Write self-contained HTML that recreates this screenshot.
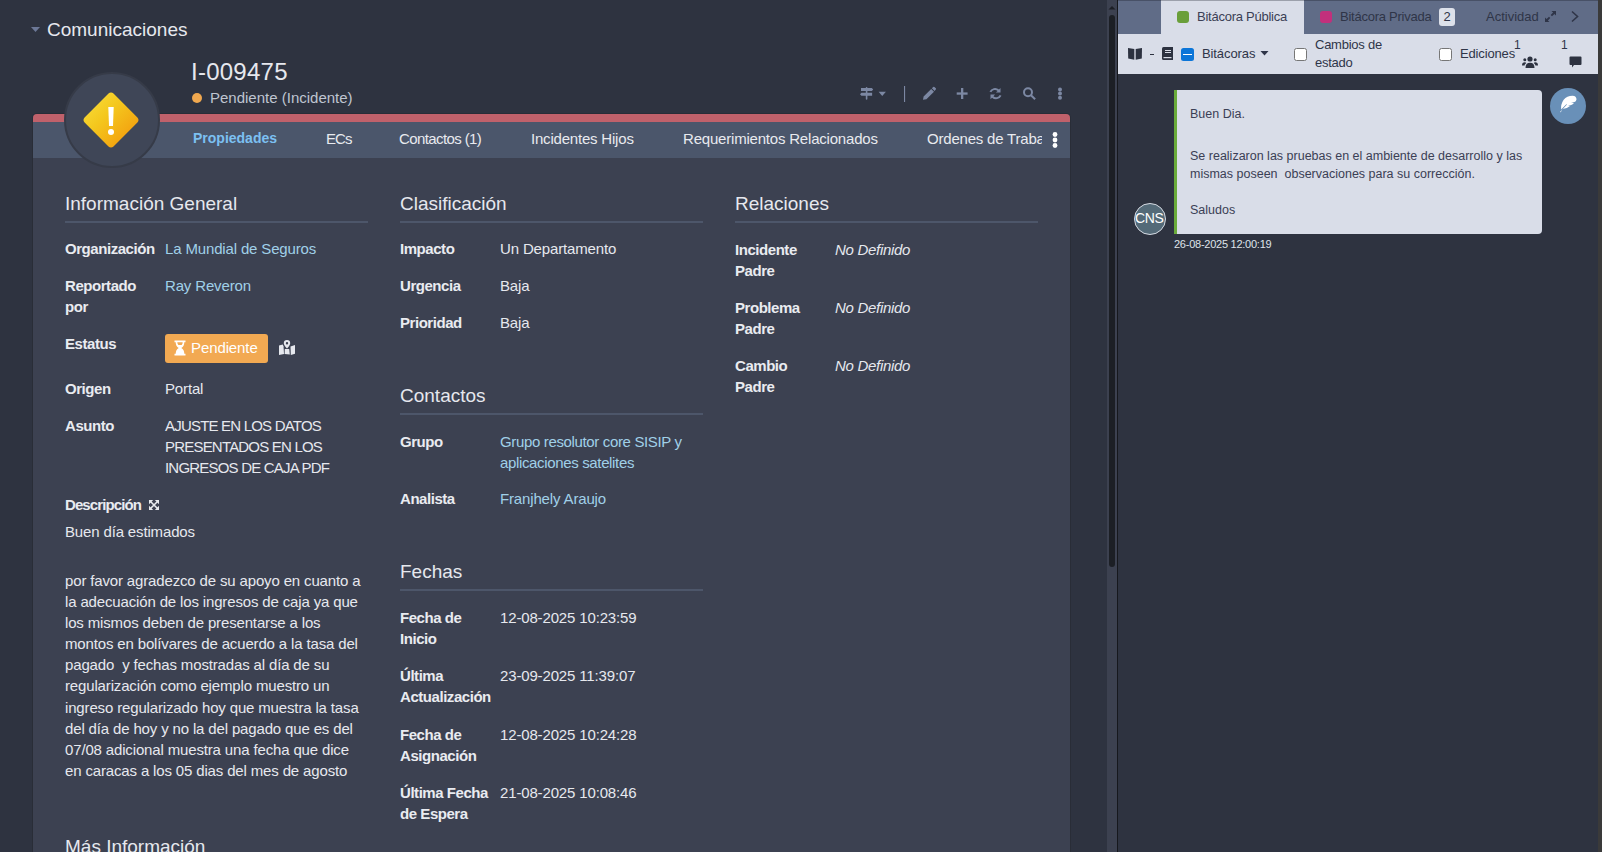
<!DOCTYPE html>
<html><head><meta charset="utf-8">
<style>
*{box-sizing:border-box;margin:0;padding:0}
html,body{width:1602px;height:852px;overflow:hidden;background:#2e3340;font-family:"Liberation Sans",sans-serif}
.a{position:absolute;white-space:nowrap}
#left{position:absolute;left:0;top:0;width:1107px;height:852px;background:#2e3340}
#sbtrack{position:absolute;left:1107px;top:0;width:10px;height:852px;background:#3c4150}
#sbthumb{position:absolute;left:1109px;top:15px;width:6px;height:552px;background:#1c1f25;border-radius:3px}
#divider{position:absolute;left:1117px;top:0;width:1px;height:852px;background:#16181d}
#right{position:absolute;left:1118px;top:0;width:480px;height:852px;background:#2e3340}
#rstrip{position:absolute;left:1598px;top:0;width:4px;height:852px;background:#3a3a3a}
.card{position:absolute;left:33px;top:114px;width:1037px;height:760px;background:#3c4151;border-radius:4px 4px 0 0;overflow:hidden;box-shadow:0 0 0 1px #292d37}
.redbar{position:absolute;left:0;top:0;width:100%;height:8px;background:#c0616b}
.tabs{position:absolute;left:0;top:8px;width:100%;height:36px;background:#4b566b}
.tab{position:absolute;top:8px;white-space:nowrap;font-size:15px;color:#e8eaef;letter-spacing:-0.2px}
.h2{font-size:19px;color:#e6e8ee;line-height:22px}
.uline{position:absolute;height:2px;background:#4d566a}
.lbl{font-size:15px;font-weight:700;color:#e9ebf0;letter-spacing:-0.45px;line-height:21px}
.val{font-size:15px;color:#e6e8ee;letter-spacing:-0.15px;line-height:21px}
.lnk{font-size:15px;color:#a0d0e8;letter-spacing:-0.15px;line-height:21px}
.it{font-size:15px;font-style:italic;color:#e6e8ee;letter-spacing:-0.3px}
.ico{fill:#7c88a3}
.rt{font-size:13px;line-height:18px;letter-spacing:-0.25px}
.msg{font-size:12.5px;line-height:18px;color:#3b4055;white-space:nowrap}
</style></head><body>
<div id="left">
  <!-- header -->
  <svg class="a" style="left:31px;top:27px" width="9" height="5" viewBox="0 0 9 5"><path d="M0 0H9L4.5 5Z" fill="#6c7897"/></svg>
  <div class="a" style="left:47px;top:19px;font-size:19px;color:#e6e8ee">Comunicaciones</div>
  <div class="a" style="left:191px;top:58px;font-size:24px;color:#e6e8ee;letter-spacing:0.25px">I-009475</div>
  <div class="a" style="left:192px;top:93px;width:10px;height:10px;border-radius:50%;background:#f0a84f"></div>
  <div class="a" style="left:210px;top:89px;font-size:15px;color:#bfc5d0">Pendiente (Incidente)</div>
</div>
<div class="card">
  <div class="redbar"></div>
  <div class="tabs">
    <div class="tab" style="left:160px;color:#7cc0f2;font-weight:700;font-size:14px;letter-spacing:0">Propiedades</div>
    <div class="tab" style="left:293px;letter-spacing:-0.9px">ECs</div>
    <div class="tab" style="left:366px;letter-spacing:-0.6px">Contactos (1)</div>
    <div class="tab" style="left:498px">Incidentes Hijos</div>
    <div class="tab" style="left:650px">Requerimientos Relacionados</div>
    <div class="tab" style="left:894px;width:115px;overflow:hidden">Ordenes de Trabajo</div>
    <svg style="position:absolute;left:1018px;top:9px" width="8" height="18" viewBox="0 0 8 18"><g fill="#fff"><circle cx="4" cy="3.5" r="2.4"/><circle cx="4" cy="9" r="2.4"/><circle cx="4" cy="14.5" r="2.4"/></g></svg>
  </div>
</div>

<div id="content">
  <!-- avatar circle -->
  <div class="a" style="left:64px;top:72px;width:96px;height:96px;border-radius:50%;background:#3f4657;border:2px solid #363b48"></div>
  <svg class="a" style="left:83px;top:92px" width="56" height="56" viewBox="0 0 56 56">
    <defs><linearGradient id="dg" x1="0" y1="0" x2="1" y2="1"><stop offset="0" stop-color="#f9e040"/><stop offset="0.4" stop-color="#f4c81e"/><stop offset="0.75" stop-color="#f3a812"/><stop offset="1" stop-color="#f38a0a"/></linearGradient></defs>
    <path d="M28 0.5 Q29.5 0.5 30.5 1.6 L54.4 25.5 Q55.5 26.6 55.5 28 Q55.5 29.4 54.4 30.5 L30.5 54.4 Q29.4 55.5 28 55.5 Q26.6 55.5 25.5 54.4 L1.6 30.5 Q0.5 29.4 0.5 28 Q0.5 26.6 1.6 25.5 L25.5 1.6 Q26.5 0.5 28 0.5Z" fill="url(#dg)"/>
    <path d="M25.3 15 H30.7 L30 34 H26 Z" fill="#fff"/><circle cx="28" cy="40" r="3" fill="#fff"/>
  </svg>
  <!-- header toolbar icons -->
  <svg class="a" style="left:855px;top:84px" width="212" height="20" viewBox="0 0 212 20">
    <g fill="#7c88a3">
      <rect x="10.8" y="3" width="1.6" height="12.7" rx="0.8"/>
      <path d="M6 3.9 H16.8 L18.2 5.45 L16.8 7 H6Z"/>
      <path d="M17.1 8.7 H6.4 L5 10.25 L6.4 11.8 H17.1Z"/>
      <path d="M23.6 7.8 H30.9 L27.25 12Z"/>
      <rect x="49" y="2" width="1.1" height="16"/>
      <path d="M68 15.7 L68.6 12.5 L76.2 4.9 L79 7.7 L71.4 15.3Z M76.9 4.2 L78.2 2.9 Q78.8 2.4 79.4 2.9 L80.8 4.3 Q81.3 4.9 80.8 5.5 L79.6 6.9Z"/>
      <rect x="106" y="4" width="2.3" height="11"/><rect x="101.7" y="8.4" width="10.9" height="2.3"/>
      <path d="M145.5 4 V8.6 H140.9 L142.6 6.9 A4.1 4.1 0 0 0 136.3 8.3 L134.5 7.5 A6.1 6.1 0 0 1 144 5.5Z"/>
      <path d="M135.5 15.2 V10.6 H140.1 L138.4 12.3 A4.1 4.1 0 0 0 144.7 10.9 L146.5 11.7 A6.1 6.1 0 0 1 137 13.7Z"/>
      <circle cx="173" cy="8.2" r="4" fill="none" stroke="#7c88a3" stroke-width="2"/>
      <path d="M175.3 11.9 L176.7 10.5 L180.8 14.6 L179.4 16Z"/>
      <circle cx="205" cy="5.5" r="2"/><circle cx="205" cy="9.6" r="2"/><circle cx="205" cy="13.7" r="2"/>
    </g>
  </svg>

  <!-- column 1 -->
  <div class="a h2" style="left:65px;top:193px">Información General</div>
  <div class="uline" style="left:65px;top:221px;width:303px"></div>
  <div class="a lbl" style="left:65px;top:238px">Organización</div>
  <div class="a lnk" style="left:165px;top:238px">La Mundial de Seguros</div>
  <div class="a lbl" style="left:65px;top:275px">Reportado<br>por</div>
  <div class="a lnk" style="left:165px;top:275px">Ray Reveron</div>
  <div class="a lbl" style="left:65px;top:333px">Estatus</div>
  <div class="a" style="left:165px;top:334px;width:103px;height:29px;border-radius:3px;background:#f2a952"></div>
  <svg class="a" style="left:174px;top:340px" width="12" height="16" viewBox="0 0 12 16"><path d="M0.5 0.5H11.5V2.3H10.3Q10.3 6.2 7.3 8Q10.3 9.8 10.3 13.7H11.5V15.5H0.5V13.7H1.7Q1.7 9.8 4.7 8Q1.7 6.2 1.7 2.3H0.5Z" fill="#fff"/><path d="M3.3 2.3H8.7Q8.7 4 7.6 5H4.4Q3.3 4 3.3 2.3Z" fill="#f2a952"/><path d="M4.6 9.6Q6 8.8 7.4 9.6Q8.7 10.8 8.7 13H3.3Q3.3 10.8 4.6 9.6Z" fill="#f2a952" opacity="0.0"/></svg>
  <div class="a" style="left:191px;top:337px;font-size:15px;color:#fff;line-height:21px;letter-spacing:-0.1px">Pendiente</div>
  <svg class="a" style="left:279px;top:340px" width="16" height="15" viewBox="0 0 16 15"><g fill="#e6e8ee"><path d="M0 5.5 L3.8 4.5 L4.5 6.2 L5 14 L0 15Z"/><path d="M5.8 9 L10.2 9 L10.8 14.6 L5.6 14Z"/><path d="M11.5 6.4 L16 5 V13.8 L11.8 15Z"/><path d="M8 0 A3.2 3.2 0 0 1 11.2 3.2 Q11.2 5.2 8 8.5 Q4.8 5.2 4.8 3.2 A3.2 3.2 0 0 1 8 0Z M8 2 A1.2 1.2 0 1 0 8 4.4 A1.2 1.2 0 1 0 8 2Z" fill-rule="evenodd"/></g></svg>
  <div class="a lbl" style="left:65px;top:378px">Origen</div>
  <div class="a val" style="left:165px;top:378px">Portal</div>
  <div class="a lbl" style="left:65px;top:415px">Asunto</div>
  <div class="a val" style="left:165px;top:415px;letter-spacing:-0.8px">AJUSTE EN LOS DATOS<br>PRESENTADOS EN LOS<br>INGRESOS DE CAJA PDF</div>
  <div class="a lbl" style="left:65px;top:494px;letter-spacing:-0.9px">Descripción</div>
  <svg class="a" style="left:149px;top:500px" width="10" height="10" viewBox="0 0 10 10"><g fill="#e8eaef"><path d="M0 0H4.2L0 4.2Z"/><path d="M10 0H5.8L10 4.2Z"/><path d="M0 10H4.2L0 5.8Z"/><path d="M10 10H5.8L10 5.8Z"/></g><path d="M1 1L9 9M9 1L1 9" stroke="#e8eaef" stroke-width="1.6"/></svg>
  <div class="a val" style="left:65px;top:521px">Buen día estimados</div>
  <div class="a val" style="left:65px;top:570px;line-height:21.1px">por favor agradezco de su apoyo en cuanto a<br>la adecuación de los ingresos de caja ya que<br>los mismos deben de presentarse a los<br>montos en bolívares de acuerdo a la tasa del<br>pagado &nbsp;y fechas mostradas al día de su<br>regularización como ejemplo muestro un<br>ingreso regularizado hoy que muestra la tasa<br>del día de hoy y no la del pagado que es del<br>07/08 adicional muestra una fecha que dice<br>en caracas a los 05 dias del mes de agosto</div>
  <div class="a h2" style="left:65px;top:836px">Más Información</div>

  <!-- column 2 -->
  <div class="a h2" style="left:400px;top:193px">Clasificación</div>
  <div class="uline" style="left:400px;top:221px;width:303px"></div>
  <div class="a lbl" style="left:400px;top:238px">Impacto</div>
  <div class="a val" style="left:500px;top:238px">Un Departamento</div>
  <div class="a lbl" style="left:400px;top:275px">Urgencia</div>
  <div class="a val" style="left:500px;top:275px">Baja</div>
  <div class="a lbl" style="left:400px;top:312px">Prioridad</div>
  <div class="a val" style="left:500px;top:312px">Baja</div>
  <div class="a h2" style="left:400px;top:385px">Contactos</div>
  <div class="uline" style="left:400px;top:413px;width:303px"></div>
  <div class="a lbl" style="left:400px;top:431px">Grupo</div>
  <div class="a lnk" style="left:500px;top:431px;letter-spacing:-0.35px">Grupo resolutor core SISIP y<br>aplicaciones satelites</div>
  <div class="a lbl" style="left:400px;top:488px">Analista</div>
  <div class="a lnk" style="left:500px;top:488px">Franjhely Araujo</div>
  <div class="a h2" style="left:400px;top:561px">Fechas</div>
  <div class="uline" style="left:400px;top:589px;width:303px"></div>
  <div class="a lbl" style="left:400px;top:607px">Fecha de<br>Inicio</div>
  <div class="a val" style="left:500px;top:607px">12-08-2025 10:23:59</div>
  <div class="a lbl" style="left:400px;top:665px">Última<br>Actualización</div>
  <div class="a val" style="left:500px;top:665px">23-09-2025 11:39:07</div>
  <div class="a lbl" style="left:400px;top:724px">Fecha de<br>Asignación</div>
  <div class="a val" style="left:500px;top:724px">12-08-2025 10:24:28</div>
  <div class="a lbl" style="left:400px;top:782px">Última Fecha<br>de Espera</div>
  <div class="a val" style="left:500px;top:782px">21-08-2025 10:08:46</div>

  <!-- column 3 -->
  <div class="a h2" style="left:735px;top:193px">Relaciones</div>
  <div class="uline" style="left:735px;top:221px;width:303px"></div>
  <div class="a lbl" style="left:735px;top:239px">Incidente<br>Padre</div>
  <div class="a it" style="left:835px;top:239px;line-height:21px">No Definido</div>
  <div class="a lbl" style="left:735px;top:297px">Problema<br>Padre</div>
  <div class="a it" style="left:835px;top:297px;line-height:21px">No Definido</div>
  <div class="a lbl" style="left:735px;top:355px">Cambio<br>Padre</div>
  <div class="a it" style="left:835px;top:355px;line-height:21px">No Definido</div>
</div>
<div id="sbtrack"></div><svg class="a" style="left:1108px;top:5px" width="8" height="5" viewBox="0 0 8 5"><path d="M0.5 4.5H7.5L4 1Z" fill="#1c1f25"/></svg><div id="sbthumb"></div><div id="divider"></div>
<div id="right"></div>
<div id="rstrip"></div>
<div id="rp">
  <div class="a" style="left:1118px;top:0;width:480px;height:34px;background:#606c87"></div>
  <div class="a" style="left:1161px;top:0;width:143px;height:34px;background:#d9dde8"></div>
  <div class="a" style="left:1118px;top:0;width:480px;height:1px;background:rgba(15,20,30,0.3)"></div>
  <div class="a" style="left:1177px;top:11px;width:12px;height:12px;border-radius:3px;background:#6a9f3a"></div>
  <div class="a rt" style="left:1197px;top:8px;color:#3b4055">Bitácora Pública</div>
  <div class="a" style="left:1320px;top:11px;width:12px;height:12px;border-radius:3px;background:#c2307c"></div>
  <div class="a rt" style="left:1340px;top:8px;color:#2f3548">Bitácora Privada</div>
  <div class="a" style="left:1439px;top:8px;width:16px;height:18px;border-radius:3px;background:#dde1ea;color:#2f3548;font-size:13px;line-height:18px;text-align:center">2</div>
  <div class="a rt" style="left:1486px;top:8px;color:#2f3548;letter-spacing:0">Actividad</div>
  <svg class="a" style="left:1544px;top:10px" width="13" height="13" viewBox="0 0 13 13"><g fill="#2f3548"><path d="M7.5 1H12V5.5L10.4 3.9L8 6.3L6.7 5L9.1 2.6Z"/><path d="M5.5 12H1V7.5L2.6 9.1L5 6.7L6.3 8L3.9 10.4Z"/></g></svg>
  <svg class="a" style="left:1570px;top:10px" width="10" height="13" viewBox="0 0 10 13"><path d="M2 1.5L7.5 6.5L2 11.5" fill="none" stroke="#2f3548" stroke-width="1.6"/></svg>

  <div class="a" style="left:1118px;top:34px;width:480px;height:40px;background:#d9dde8"></div>
  <svg class="a" style="left:1127px;top:47px" width="16" height="13" viewBox="0 0 16 13"><g fill="#2d3240"><path d="M1 1 L7.3 2 V12.8 L1.2 11.6Z"/><path d="M15 1 L8.7 2 V12.8 L14.8 11.6Z"/></g></svg>
  <div class="a" style="left:1150px;top:54px;width:4px;height:1.3px;background:#2d3240"></div>
  <svg class="a" style="left:1162px;top:47px" width="11" height="13" viewBox="0 0 11 13"><path d="M1.5 0H11V13H1.5Q0 13 0 11.5V1.5Q0 0 1.5 0Z" fill="#2d3240"/><g fill="#d9dde8"><rect x="3" y="3" width="6" height="1"/><rect x="3" y="5" width="6" height="1"/><rect x="1.5" y="10" width="8" height="1.2"/></g></svg>
  <div class="a" style="left:1181px;top:48px;width:13px;height:13px;border-radius:2.5px;background:#0b75d8"></div>
  <div class="a" style="left:1183px;top:53.5px;width:9px;height:1.8px;background:#fff"></div>
  <div class="a rt" style="left:1202px;top:45px;color:#2f3548;letter-spacing:-0.1px">Bitácoras</div>
  <svg class="a" style="left:1260px;top:51px" width="9" height="5" viewBox="0 0 9 5"><path d="M0.5 0H8.5L4.5 4.5Z" fill="#2f3548"/></svg>
  <div class="a" style="left:1294px;top:48px;width:13px;height:13px;border-radius:2.5px;background:#fff;border:1px solid #767676"></div>
  <div class="a rt" style="left:1315px;top:36px;color:#2f3548;line-height:18px">Cambios de<br>estado</div>
  <div class="a" style="left:1439px;top:48px;width:13px;height:13px;border-radius:2.5px;background:#fff;border:1px solid #767676"></div>
  <div class="a rt" style="left:1460px;top:45px;color:#2f3548;letter-spacing:-0.15px">Ediciones</div>
  <div class="a" style="left:1514px;top:38px;font-size:12px;color:#2f3548;line-height:14px">1</div>
  <svg class="a" style="left:1522px;top:56px" width="16" height="12" viewBox="0 0 16 12"><g fill="#2d3240"><circle cx="8" cy="3" r="2.6"/><path d="M3.5 12 Q3.5 6.8 8 6.8 Q12.5 6.8 12.5 12Z"/><circle cx="2.8" cy="3.8" r="1.5"/><circle cx="13.2" cy="3.8" r="1.5"/><path d="M0 9.5 Q0 6.3 2.8 6.3 Q3.8 6.3 4.3 6.9 Q2.7 8 2.6 9.5Z"/><path d="M16 9.5 Q16 6.3 13.2 6.3 Q12.2 6.3 11.7 6.9 Q13.3 8 13.4 9.5Z"/></g></svg>
  <div class="a" style="left:1561px;top:38px;font-size:12px;color:#2f3548;line-height:14px">1</div>
  <svg class="a" style="left:1569px;top:56px" width="13" height="12" viewBox="0 0 13 12"><path d="M1.5 0.5H11.5Q12.5 0.5 12.5 1.5V8Q12.5 9 11.5 9H5L3 11.5V9H1.5Q0.5 9 0.5 8V1.5Q0.5 0.5 1.5 0.5Z" fill="#2d3240"/></svg>

  <!-- message -->
  <div class="a" style="left:1174px;top:90px;width:368px;height:144px;background:#d9dde8;border-radius:0 4px 4px 0;border-left:3px solid #6aab3a"></div>
  <div class="a msg" style="left:1190px;top:105px">Buen Dia.</div>
  <div class="a msg" style="left:1190px;top:147px">Se realizaron las pruebas en el ambiente de desarrollo y las</div>
  <div class="a msg" style="left:1190px;top:165px">mismas poseen &nbsp;observaciones para su corrección.</div>
  <div class="a msg" style="left:1190px;top:201px">Saludos</div>
  <div class="a" style="left:1134px;top:203px;width:32px;height:32px;border-radius:50%;background:#546a78;border:1px solid #d6dbe3"></div>
  <div class="a" style="left:1135px;top:210px;font-size:14px;line-height:16px;color:#fff;letter-spacing:-0.3px">CNS</div>
  <div class="a" style="left:1174px;top:238px;font-size:11px;line-height:12px;color:#dfe3ea;letter-spacing:-0.25px">26-08-2025 12:00:19</div>
  <div class="a" style="left:1550px;top:88px;width:36px;height:36px;border-radius:50%;background:#6990b8"></div>
  <svg class="a" style="left:1558px;top:95px" width="20" height="18" viewBox="0 0 20 18"><path d="M2 17 L9 9.5 L8.3 9.3 L3.2 14.6 Q2.5 9.5 5.5 5 Q9 0.8 14.5 0.8 Q18.5 1 18.5 4.5 Q18 6.5 16.5 7 L13 7.8 L16 8 Q14.5 10 12.5 10.2 L10 10.6 L12 11 Q9.5 13.5 4.5 14 L2.8 17.3Z" fill="#fff"/></svg>
</div>

</body></html>
